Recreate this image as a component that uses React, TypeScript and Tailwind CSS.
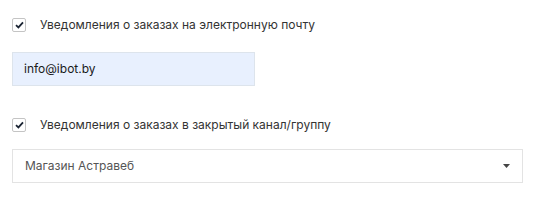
import React from "react";

function Check() {
  return (
    <span className="flex h-[14px] w-[14px] items-center justify-center border border-[#c4c4c4] bg-white rounded-[2px]">
      <svg width="9" height="8" viewBox="0 0 9 8">
        <path d="M1 4.2 L3.4 6.4 L8 1.4" fill="none" stroke="#1a2433" strokeWidth="1.8" />
      </svg>
    </span>
  );
}

export default function App() {
  return (
    <div className="w-[533px] h-[200px] bg-white px-3 pt-[18px] text-[12px] text-[#333]" style={{ fontFamily: "Inter, 'Noto Sans', sans-serif" }}>
      <label className="flex items-center gap-[14px] h-[14px]">
        <Check />
        <span>Уведомления о заказах на электронную почту</span>
      </label>
      <div className="mt-[20px] flex h-[34px] w-[243px] items-center border border-[#dde4ec] bg-[#e8f0fe] pl-[11px] text-[#1a1a1a]">
        info@ibot.by
      </div>
      <label className="mt-[32px] flex items-center gap-[14px] h-[14px]">
        <Check />
        <span>Уведомления о заказах в закрытый канал/группу</span>
      </label>
      <div className="mt-[17px] flex h-[34px] w-[511px] items-center justify-between border border-[#e3e3e3] bg-white pl-3 pr-[12px] text-[#555]">
        <span>Магазин Астравеб</span>
        <svg width="7" height="4" viewBox="0 0 7 4">
          <path d="M0 0 L7 0 L3.5 4 Z" fill="#444" />
        </svg>
      </div>
    </div>
  );
}
